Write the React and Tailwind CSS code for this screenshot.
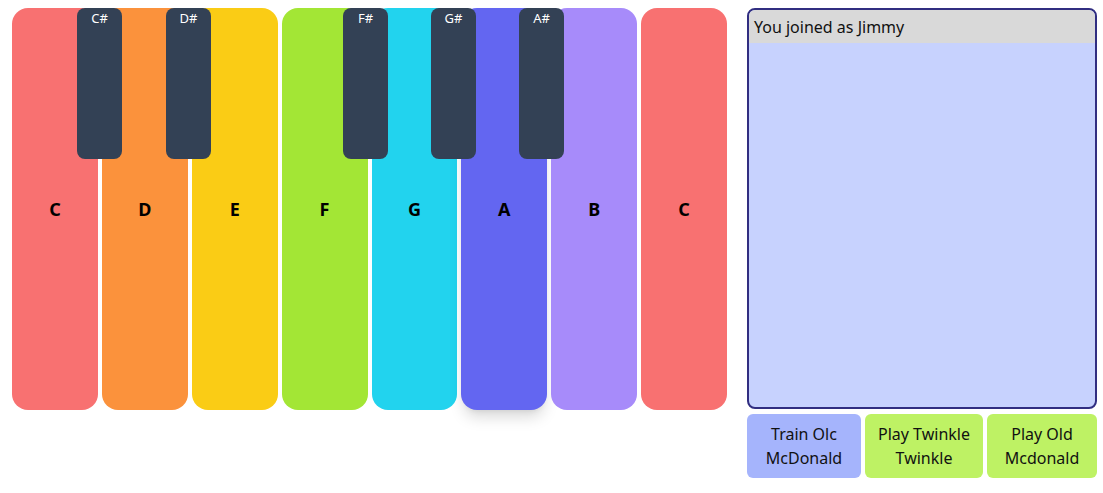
const whiteKeys = [
  { note: "C", color: "bg-[#f87171]" },
  { note: "D", color: "bg-[#fb923c]" },
  { note: "E", color: "bg-[#facc15]" },
  { note: "F", color: "bg-[#a3e635]" },
  { note: "G", color: "bg-[#22d3ee]" },
  { note: "A", color: "bg-[#6366f1]", active: true },
  { note: "B", color: "bg-[#a78bfa]" },
  { note: "C", color: "bg-[#f87171]" },
];

const blackKeys = [
  { note: "C#", left: "left-[65px]" },
  { note: "D#", left: "left-[154px]" },
  { note: "F#", left: "left-[331px]" },
  { note: "G#", left: "left-[419px]" },
  { note: "A#", left: "left-[507px]" },
];

function Piano() {
  return (
    <div className="relative flex gap-1 w-[715px] h-[402px]">
      {whiteKeys.map((k, i) => (
        <div
          key={i}
          className={`flex-1 h-full rounded-2xl flex items-center justify-center ${k.color} ${
            k.active ? "shadow-[0_10px_15px_-3px_rgba(0,0,0,0.15),0_4px_6px_-4px_rgba(0,0,0,0.1)]" : ""
          }`}
        >
          <span className="text-[18px] font-bold text-black">{k.note}</span>
        </div>
      ))}
      {blackKeys.map((k) => (
        <div
          key={k.note}
          className={`absolute top-0 ${k.left} w-[45px] h-[151px] bg-[#334155] rounded-lg flex justify-center pt-px`}
        >
          <span className="text-[13px] text-white leading-[18px]">{k.note}</span>
        </div>
      ))}
    </div>
  );
}

function ChatPanel() {
  return (
    <div className="w-[350px] flex flex-col gap-[5px]">
      <div className="h-[401px] border-2 border-[#312e81] rounded-lg bg-[#c7d2fe] overflow-hidden">
        <div className="bg-[#d9d9d9] h-[33px] px-[5px] flex items-center text-[16px] text-[#111]">
          You joined as Jimmy
        </div>
      </div>
      <div className="flex gap-1">
        <button className="w-[114px] h-[64px] rounded-md bg-[#a5b4fc] text-[16px] leading-6 text-[#111]">
          Train Olc
          <br />
          McDonald
        </button>
        <button className="w-[118px] h-[64px] rounded-md bg-[#bef264] text-[16px] leading-6 text-[#111]">
          Play Twinkle
          <br />
          Twinkle
        </button>
        <button className="w-[110px] h-[64px] rounded-md bg-[#bef264] text-[16px] leading-6 text-[#111]">
          Play Old
          <br />
          Mcdonald
        </button>
      </div>
    </div>
  );
}

export default function App() {
  return (
    <div
      className="w-[1103px] h-[493px] bg-white pt-2 pl-3 flex gap-5"
      style={{ fontFamily: '"Noto Sans", "Open Sans", sans-serif' }}
    >
      <Piano />
      <ChatPanel />
    </div>
  );
}
